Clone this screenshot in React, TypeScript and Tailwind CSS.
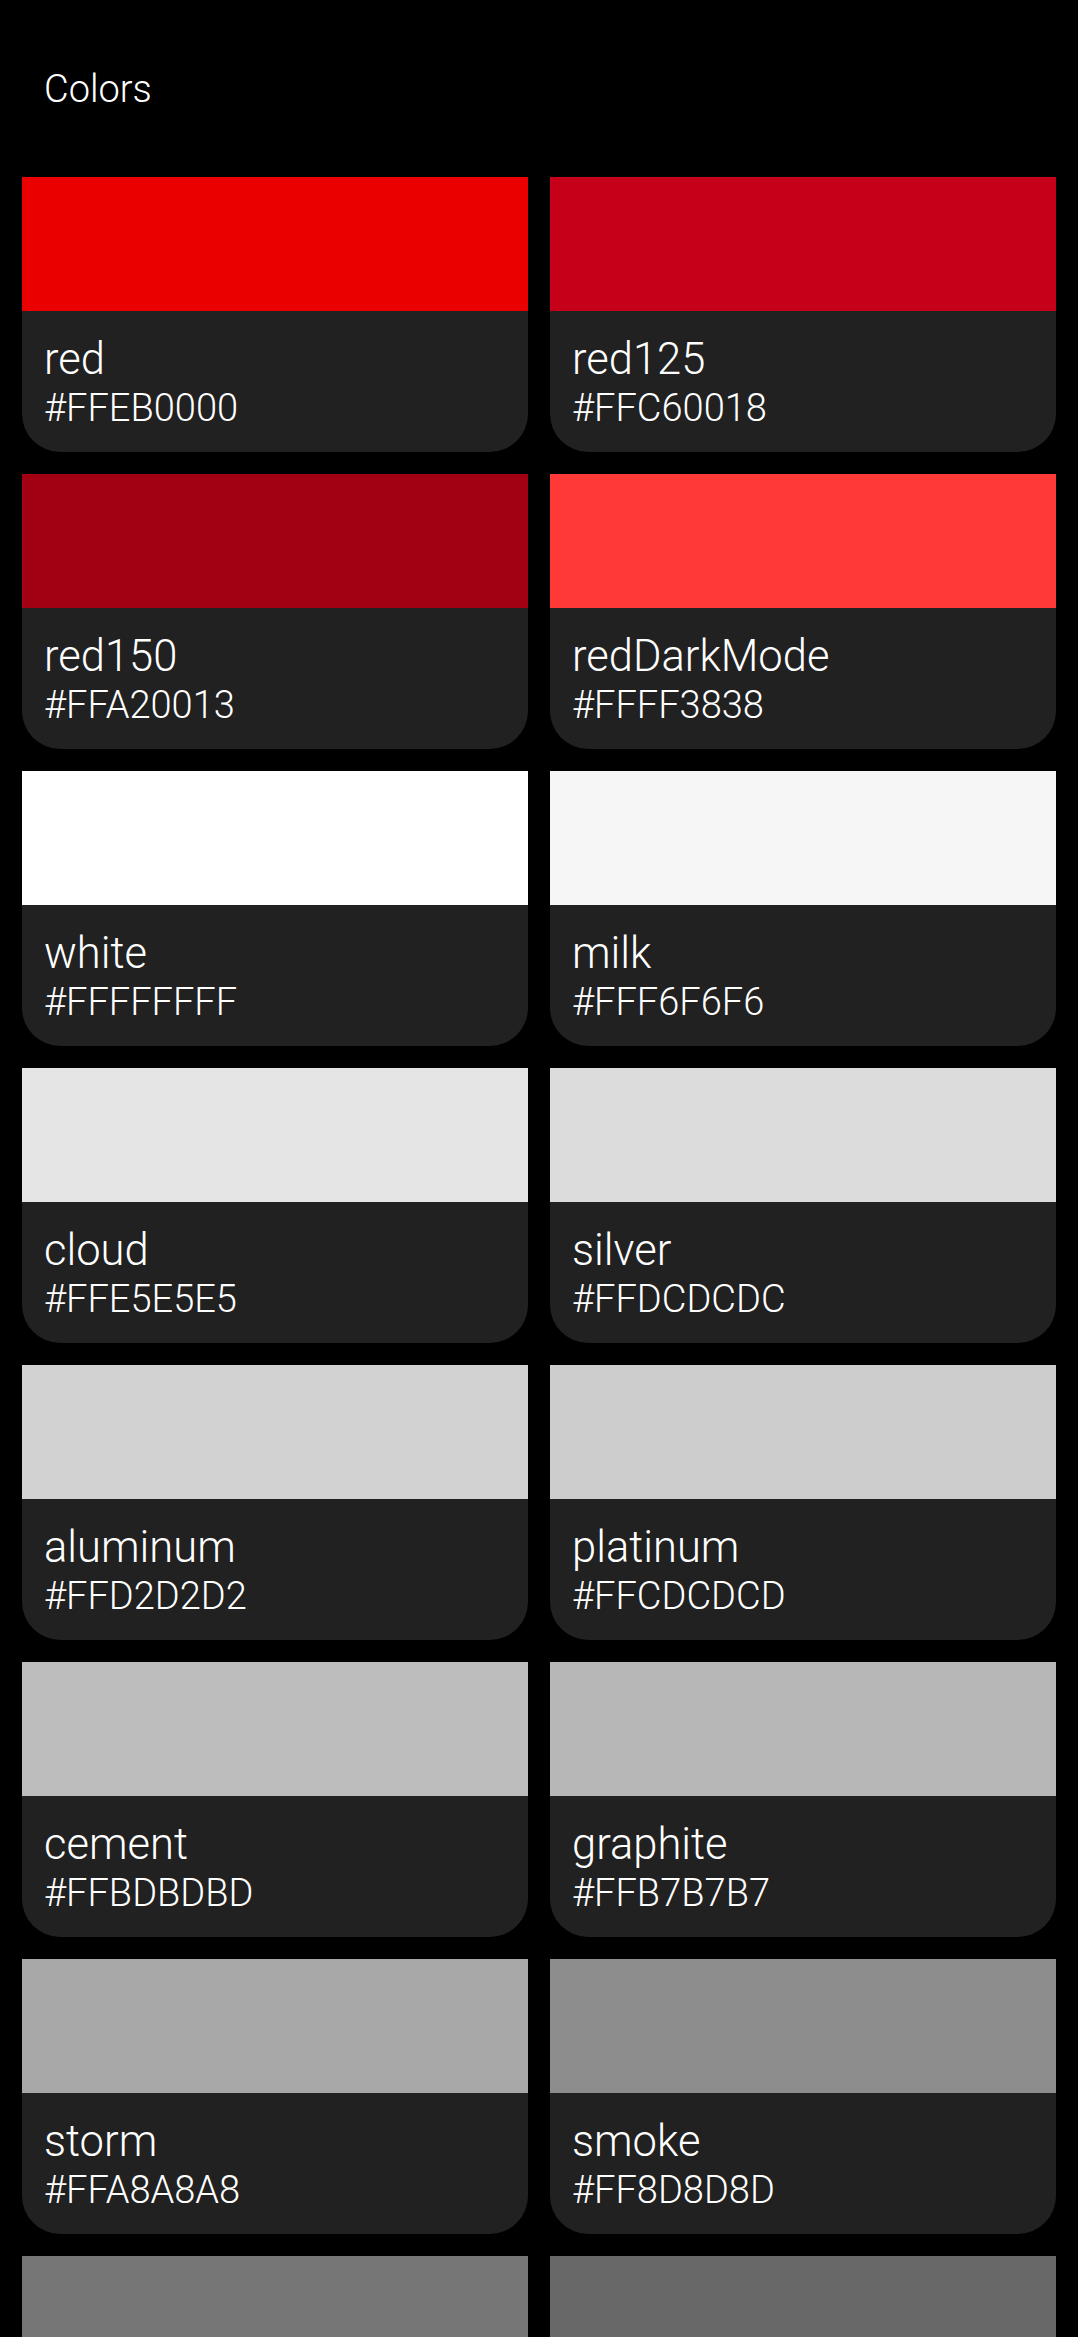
import React from "react";

const colors: { name: string; hex: string }[] = [
  { name: "red", hex: "EB0000" },
  { name: "red125", hex: "C60018" },
  { name: "red150", hex: "A20013" },
  { name: "redDarkMode", hex: "FF3838" },
  { name: "white", hex: "FFFFFF" },
  { name: "milk", hex: "F6F6F6" },
  { name: "cloud", hex: "E5E5E5" },
  { name: "silver", hex: "DCDCDC" },
  { name: "aluminum", hex: "D2D2D2" },
  { name: "platinum", hex: "CDCDCD" },
  { name: "cement", hex: "BDBDBD" },
  { name: "graphite", hex: "B7B7B7" },
  { name: "storm", hex: "A8A8A8" },
  { name: "smoke", hex: "8D8D8D" },
  { name: "metal", hex: "767676" },
  { name: "granite", hex: "686868" },
];

export default function App() {
  return (
    <div
      className="h-[2337px] w-full overflow-hidden bg-black text-white"
      style={{ fontFamily: "Roboto, 'Noto Sans', sans-serif" }}
    >
      <div className="h-[177px] pt-[67px] pl-[44px]">
        <h1 className="text-[38px] leading-[44px] font-light">Colors</h1>
      </div>
      <div className="grid grid-cols-2 gap-[22px] px-[22px]">
        {colors.map((c) => (
          <div key={c.name} className="h-[275px] rounded-b-[38px] bg-[#212121] overflow-hidden">
            <div className="h-[134px]" style={{ backgroundColor: `#${c.hex}` }} />
            <div className="pt-[23px] pl-[22px]">
              <div className="text-[43.5px] leading-[52px] font-light">{c.name}</div>
              <div className="text-[38px] leading-[44px] font-light">#FF{c.hex}</div>
            </div>
          </div>
        ))}
      </div>
    </div>
  );
}
